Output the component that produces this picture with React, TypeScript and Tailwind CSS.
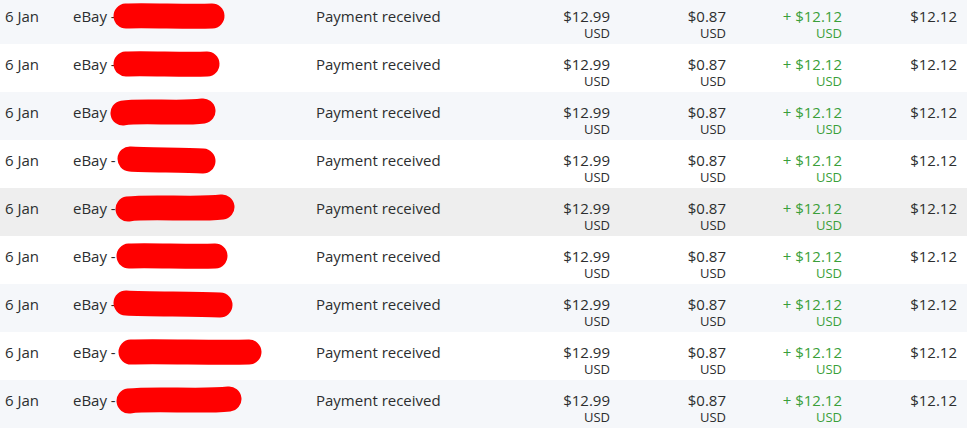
import React from "react";

// Redaction scribbles: x shift, length, slight tilt
const rows = [
  { shade: "light", mark: { x: 0, w: 110, dy: 0 } },
  { shade: "white", mark: { x: 0, w: 105, dy: 0 } },
  { shade: "light", mark: { x: -3, w: 104, dy: 1 } },
  { shade: "white", mark: { x: 4, w: 97, dy: -1 } },
  { shade: "hover", mark: { x: 2, w: 118, dy: 1 } },
  { shade: "white", mark: { x: 3, w: 110, dy: 0 } },
  { shade: "light", mark: { x: 0, w: 118, dy: -1 } },
  { shade: "white", mark: { x: 5, w: 142, dy: 0 } },
  { shade: "light", mark: { x: 3, w: 124, dy: 1 } },
];

function Scribble({ x, w, dy }: { x: number; w: number; dy: number }) {
  const h = 28;
  return (
    <svg width={w + 4} height={h} viewBox={`0 0 ${w + 4} ${h}`} className="shrink-0" style={{ marginLeft: x - 8 }}>
      <path
        d={`M14 ${14 + dy} C ${w * 0.3} ${13 - dy}, ${w * 0.7} ${15 + dy}, ${w - 10} ${14 - dy}`}
        stroke="#ff0000"
        strokeWidth={25}
        strokeLinecap="round"
        fill="none"
      />
    </svg>
  );
}

function Money({ value, green }: { value: string; green?: boolean }) {
  return (
    <div className={green ? "text-[#3a9f3a]" : ""}>
      <div className="text-[15px] leading-[18px]">{value}</div>
      <div className="text-[13px] leading-[16px]">USD</div>
    </div>
  );
}

export default function App() {
  return (
    <div className="w-[967px] h-[428px] overflow-hidden bg-white font-['Open_Sans',sans-serif] text-[#2c2e2f]">
      <div className="-mt-[4px]">
        {rows.map((r, i) => (
          <div
            key={i}
            className={
              "flex h-[48px] pt-[11px] " +
              (r.shade === "light" ? "bg-[#f5f7fa]" : r.shade === "hover" ? "bg-[#eeeeee]" : "bg-white")
            }
          >
            <div className="w-[73px] pl-[5px] text-[15px] leading-[18px]">6 Jan</div>
            <div className="w-[243px] flex items-start text-[15px] leading-[18px]">
              <span className="whitespace-pre">eBay - </span>
              <span className="-mt-[5px]">
                <Scribble {...r.mark} />
              </span>
            </div>
            <div className="flex-1 text-[15px] leading-[18px]">Payment received</div>
            <div className="w-[116px] pr-[10px] text-right">
              <Money value="$12.99" />
            </div>
            <div className="w-[116px] pr-[10px] text-right">
              <Money value="$0.87" />
            </div>
            <div className="w-[116px] pr-[10px] text-right">
              <Money value="+ $12.12" green />
            </div>
            <div className="w-[115px] pr-[10px] text-right text-[15px] leading-[18px]">$12.12</div>
          </div>
        ))}
      </div>
    </div>
  );
}
